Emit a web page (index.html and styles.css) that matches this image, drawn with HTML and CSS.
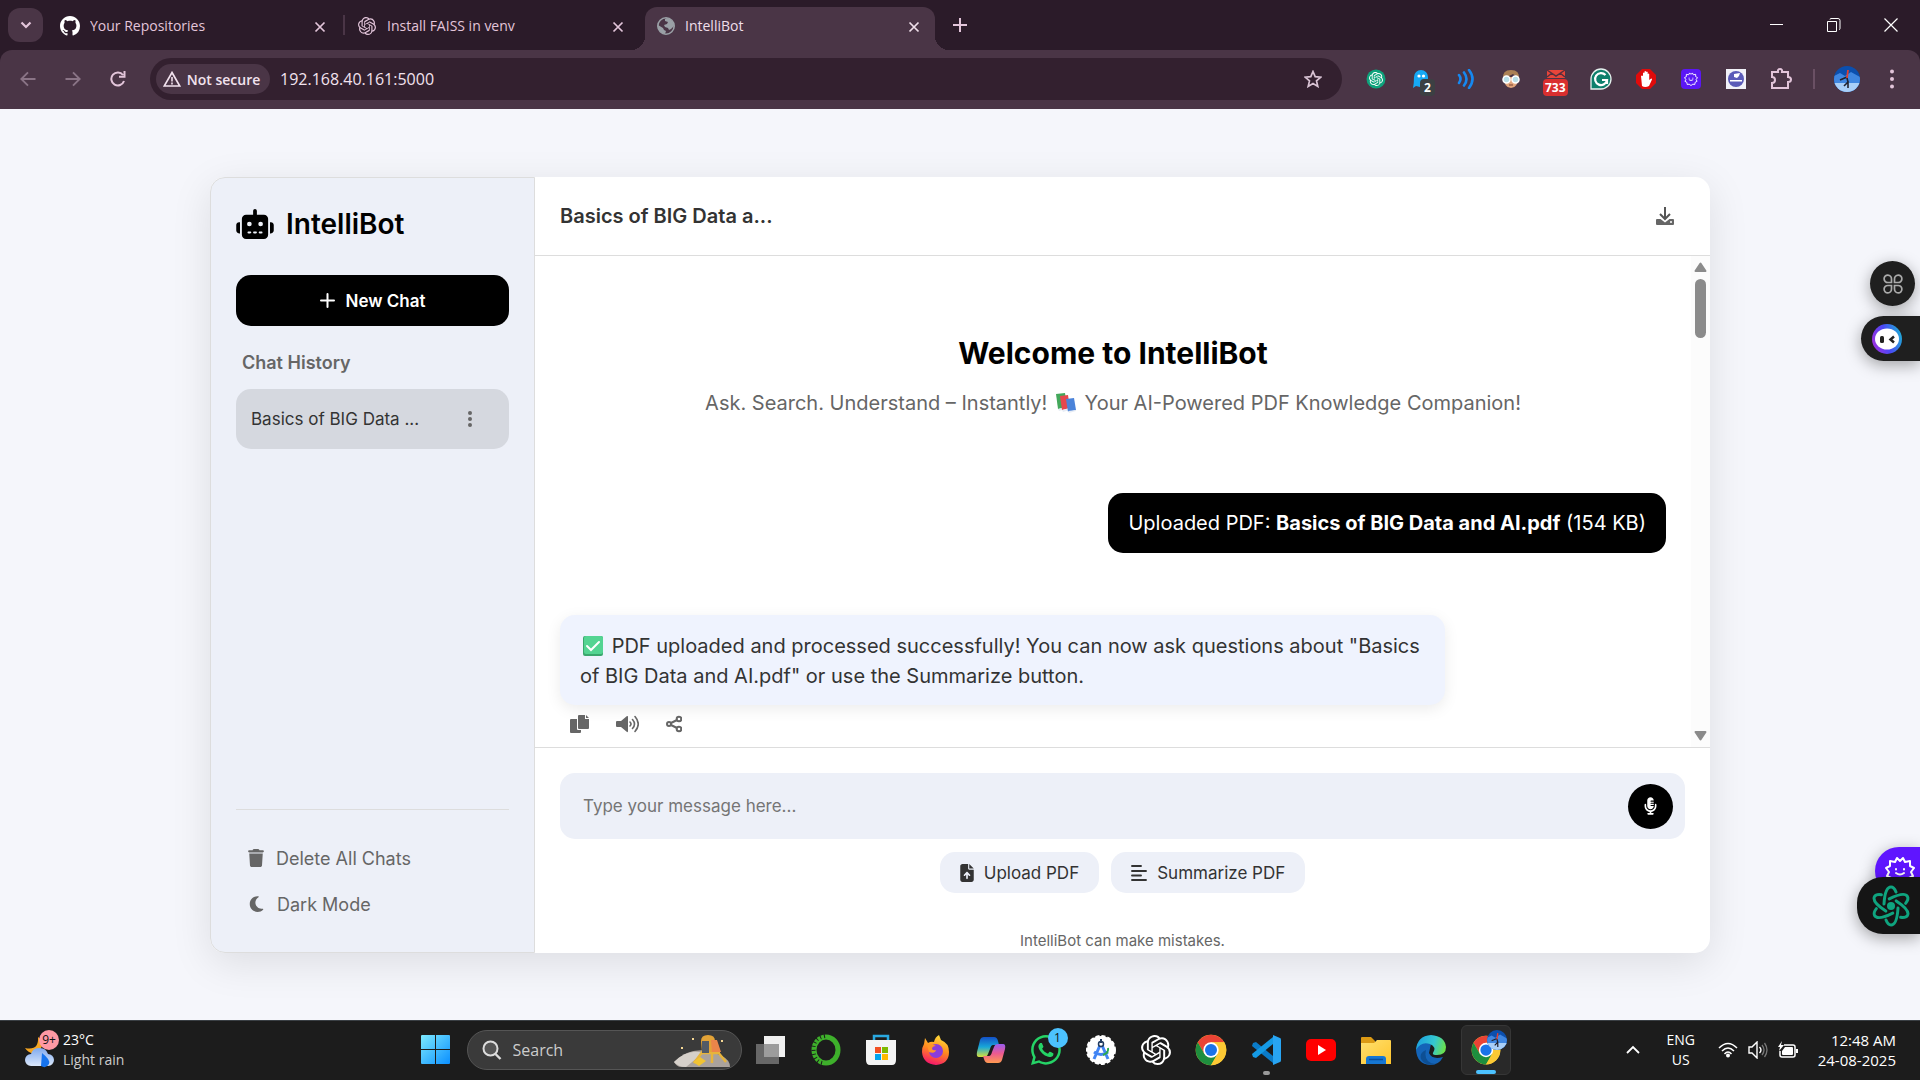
FILE: index.html
```html
<!DOCTYPE html>
<html lang="en">
<head>
<meta charset="utf-8">
<meta name="viewport" content="width=device-width, initial-scale=1">
<title>IntelliBot</title>
<link rel="stylesheet" href="styles.css">
</head>
<body>
<svg class="defs" width="0" height="0" aria-hidden="true">
  <defs>
    <symbol id="openai" viewBox="0 0 24 24"><path fill="currentColor" d="M22.2819 9.8211a5.9847 5.9847 0 0 0-.5157-4.9108 6.0462 6.0462 0 0 0-6.5098-2.9A6.0651 6.0651 0 0 0 4.9807 4.1818a5.9847 5.9847 0 0 0-3.9977 2.9 6.0462 6.0462 0 0 0 .7427 7.0966 5.98 5.98 0 0 0 .511 4.9107 6.051 6.051 0 0 0 6.5146 2.9001A5.9847 5.9847 0 0 0 13.2599 24a6.0557 6.0557 0 0 0 5.7718-4.2058 5.9894 5.9894 0 0 0 3.9977-2.9001 6.0557 6.0557 0 0 0-.7475-7.0729zm-9.022 12.6081a4.4755 4.4755 0 0 1-2.8764-1.0408l.1419-.0804 4.7783-2.7582a.7948.7948 0 0 0 .3927-.6813v-6.7369l2.02 1.1686a.071.071 0 0 1 .038.052v5.5826a4.504 4.504 0 0 1-4.4945 4.4944zm-9.6607-4.1254a4.4708 4.4708 0 0 1-.5346-3.0137l.142.0852 4.783 2.7582a.7712.7712 0 0 0 .7806 0l5.8428-3.3685v2.3324a.0804.0804 0 0 1-.0332.0615L9.74 19.9502a4.4992 4.4992 0 0 1-6.1408-1.6464zM2.3408 7.8956a4.485 4.485 0 0 1 2.3655-1.9728V11.6a.7664.7664 0 0 0 .3879.6765l5.8144 3.3543-2.0201 1.1685a.0757.0757 0 0 1-.071 0l-4.8303-2.7865A4.504 4.504 0 0 1 2.3408 7.872zm16.5963 3.8558L13.1038 8.364 15.1192 7.2a.0757.0757 0 0 1 .071 0l4.8303 2.7913a4.4944 4.4944 0 0 1-.6765 8.1042v-5.6772a.79.79 0 0 0-.407-.667zm2.0107-3.0231l-.142-.0852-4.7735-2.7818a.7759.7759 0 0 0-.7854 0L9.409 9.2297V6.8974a.0662.0662 0 0 1 .0284-.0615l4.8303-2.7866a4.4992 4.4992 0 0 1 6.6802 4.66zM8.3065 12.863l-2.02-1.1638a.0804.0804 0 0 1-.038-.0567V6.0742a4.4992 4.4992 0 0 1 7.3757-3.4537l-.142.0805L8.704 5.459a.7948.7948 0 0 0-.3927.6813zm1.0976-2.3654l2.602-1.4998 2.6069 1.4998v2.9994l-2.5974 1.4997-2.6067-1.4997Z"/></symbol>
    <symbol id="close" viewBox="0 0 12 12"><path d="M1.5 1.5l9 9M10.5 1.5l-9 9" fill="none" stroke="currentColor" stroke-width="1.7"/></symbol>
    <symbol id="chrome" viewBox="0 0 48 48">
      <circle cx="24" cy="24" r="23" fill="#fcc934"/>
      <path d="M4.1 12.5A23 23 0 0 1 43.9 12.5H24L14 29.8z" fill="#ea4335"/>
      <path d="M4.1 12.5A23 23 0 0 0 24 47L34 29.8 24 35 14 29.8z" fill="#1e8e3e"/>
      <path d="M24 47l10-17.2 1.2-13.8-11.2-3.5h19.9A23 23 0 0 1 24 47z" fill="#fcc934"/>
      <circle cx="24" cy="24" r="11.5" fill="#fff"/><circle cx="24" cy="24" r="9" fill="#1a73e8"/>
    </symbol>
    <symbol id="avatar" viewBox="0 0 26 26">
      <clipPath id="avatar-clip"><circle cx="13" cy="13" r="13"/></clipPath>
      <g clip-path="url(#avatar-clip)"><path fill="#0b4fae" d="M0 0h26v26H0z"/><path fill="#3f86e0" d="M0 10l6-3 5 3 6-4 9 5v15H0z"/><path fill="#a9cff8" d="M0 17h26v9H0z"/><path d="M6 14l7-3M13 12l1 4-4 4M14 15v7" fill="none" stroke="#22222e" stroke-width="1.600"/><path d="M14 4l-1 8" stroke="#e04030" stroke-width="1.800"/></g>
    </symbol>
    <symbol id="flower" viewBox="0 0 30 30"><path fill="none" stroke="currentColor" stroke-width="2" stroke-linejoin="round" d="M15 5l3-3 2 4 5-1v5l4 2-3 4 2 4-4 2-1 5-4-1-4 3-4-3-4 1-1-5-4-2 2-4-3-4 4-2V5l5 1 2-4z"/><path fill="none" stroke="currentColor" stroke-width="2" stroke-linecap="round" d="M11 13v.5M19 13v.5M11 17q4 3 8 0"/></symbol>
    <linearGradient id="win" x1="0" y1="0" x2="1" y2="1"><stop offset="0" stop-color="#7deaff"/><stop offset="1" stop-color="#0a8fff"/></linearGradient>
    <linearGradient id="cloud" x1="0" y1="0" x2="0" y2="1"><stop offset="0" stop-color="#7fa9ee"/><stop offset="1" stop-color="#dbe8fb"/></linearGradient>
    <linearGradient id="fox" x1=".7" y1="0" x2=".4" y2="1"><stop offset="0" stop-color="#ffe03a"/><stop offset=".5" stop-color="#ff8a1e"/><stop offset="1" stop-color="#f5156c"/></linearGradient>
    <linearGradient id="copa" x1="0" y1="0" x2="0" y2="1"><stop offset="0" stop-color="#1450c8"/><stop offset=".5" stop-color="#18a7d8"/><stop offset="1" stop-color="#d8e03a"/></linearGradient>
    <linearGradient id="copb" x1="0" y1="0" x2="0" y2="1"><stop offset="0" stop-color="#9a5cf0"/><stop offset=".5" stop-color="#ec5a90"/><stop offset="1" stop-color="#ff9a50"/></linearGradient>
    <linearGradient id="edge" x1="0" y1=".3" x2="1" y2=".5"><stop offset="0" stop-color="#1ba0e0"/><stop offset=".6" stop-color="#35c8d0"/><stop offset="1" stop-color="#6be04a"/></linearGradient>
    <linearGradient id="folder" x1="0" y1="0" x2="1" y2="1"><stop offset="0" stop-color="#ffe070"/><stop offset="1" stop-color="#ffc52c"/></linearGradient>
    <linearGradient id="ring" x1="0" y1=".7" x2="1" y2=".4"><stop offset="0" stop-color="#a030e0"/><stop offset=".5" stop-color="#4a48f5"/><stop offset="1" stop-color="#20a8d8"/></linearGradient>
  </defs>
</svg>

<header class="browser">
  <div class="tabs">
    <button class="tab-search" aria-label="Search tabs"><svg width="12" height="8" viewBox="0 0 12 8"><path d="M1.500 1.500L6 6l4.500-4.500" fill="none" stroke="currentColor" stroke-width="2.200"/></svg></button>
    <div class="tab tab-first">
      <svg width="20" height="20" viewBox="0 0 16 16"><path fill="#fff" d="M8 0C3.580 0 0 3.580 0 8c0 3.540 2.290 6.530 5.470 7.590.4.07.55-.17.55-.38 0-.19-.01-.82-.01-1.490-2.010.37-2.530-.49-2.690-.94-.09-.23-.48-.94-.82-1.130-.28-.15-.68-.52-.01-.53.63-.01 1.080.58 1.230.82.72 1.210 1.870.87 2.330.66.07-.52.28-.87.51-1.070-1.780-.2-3.640-.89-3.640-3.950 0-.87.31-1.590.82-2.150-.08-.2-.36-1.020.08-2.120 0 0 .67-.21 2.200.82.64-.18 1.320-.27 2-.27s1.360.09 2 .27c1.530-1.040 2.200-.82 2.200-.82.44 1.100.16 1.920.08 2.120.51.56.82 1.270.82 2.150 0 3.070-1.870 3.750-3.650 3.950.29.25.54.73.54 1.480 0 1.070-.01 1.930-.01 2.200 0 .21.15.46.55.38A8.010 8.010 0 0 0 16 8c0-4.420-3.580-8-8-8z"/></svg>
      <span>Your Repositories</span>
      <button class="tab-close" aria-label="Close tab"><svg width="12" height="12"><use href="#close"/></svg></button>
    </div>
    <div class="tab tab-second">
      <svg width="18" height="18"><use href="#openai"/></svg>
      <span>Install FAISS in venv</span>
      <button class="tab-close" aria-label="Close tab"><svg width="12" height="12"><use href="#close"/></svg></button>
    </div>
    <div class="tab tab-active">
      <svg width="18" height="18" viewBox="0 0 18 18"><circle cx="9" cy="9" r="8.200" fill="#4a3546" stroke="#9aa0a6" stroke-width="1.600"/><path fill="#9aa0a6" d="M1 8l5 3 1 2 2 1-1 3C3 16 1 13 1 8zM8 2l2-1c4 1 7 4 7 8l-3 3-2 1-1-2-3-1-1-2 3-1 1-2-3-1z"/></svg>
      <span>IntelliBot</span>
      <button class="tab-close" aria-label="Close tab"><svg width="12" height="12"><use href="#close"/></svg></button>
    </div>
    <button class="new-tab" aria-label="New tab"><svg width="14" height="14" viewBox="0 0 14 14"><path d="M7 0v14M0 7h14" stroke="currentColor" stroke-width="2"/></svg></button>
    <div class="window-controls">
      <button aria-label="Minimize"><svg width="14" height="14" viewBox="0 0 14 14"><path d="M0 6.500h13" stroke="#fff"/></svg></button>
      <button aria-label="Restore"><svg width="14" height="14" viewBox="0 0 14 14"><path d="M.5 3.500h9v10h-9zM3 1.500q0-1 1-1h7q2 0 2 2v8q0 1-1 1" fill="none" stroke="#fff"/></svg></button>
      <button aria-label="Close"><svg width="14" height="14" viewBox="0 0 14 14"><path d="M.5.5l13 13M13.500.5l-13 13" stroke="#fff" stroke-width="1.200"/></svg></button>
    </div>
  </div>
  <div class="toolbar">
    <nav class="nav-buttons">
      <button class="dim" aria-label="Back"><svg width="16" height="16" viewBox="0 0 16 16"><path d="M15.500 8H1.500M8 1.300L1.300 8 8 14.700" fill="none" stroke="currentColor" stroke-width="1.900"/></svg></button>
      <button class="dim" aria-label="Forward"><svg width="16" height="16" viewBox="0 0 16 16"><path d="M.5 8h14M8 1.300L14.700 8 8 14.700" fill="none" stroke="currentColor" stroke-width="1.900"/></svg></button>
      <button aria-label="Reload"><svg width="16" height="16" viewBox="0 0 16 16"><path d="M14 10A6.500 6.500 0 1 1 13 4M14.500 0v5.800H9" fill="none" stroke="currentColor" stroke-width="2"/></svg></button>
    </nav>
    <div class="omnibox">
      <button class="chip"><svg width="18" height="16" viewBox="0 0 18 16"><path d="M9 1.500L16.800 15H1.200z" fill="none" stroke="currentColor" stroke-width="1.700"/><path d="M9 6v4.500M9 11.500v2" stroke="currentColor" stroke-width="1.600"/></svg>Not secure</button>
      <input type="text" class="url" aria-label="Address" value="192.168.40.161:5000">
      <button class="star" aria-label="Bookmark"><svg width="18" height="18" viewBox="0 0 18 18"><path d="M9 1.500l2.200 5.200 5.600.5-4.300 3.700 1.300 5.500L9 13.500l-4.800 2.900 1.300-5.500L1.200 7.200l5.600-.5z" fill="none" stroke="currentColor" stroke-width="1.700"/></svg></button>
    </div>
    <div class="extensions">
      <button aria-label="ChatGPT extension"><svg width="20" height="20" viewBox="0 0 20 20"><circle cx="10" cy="10" r="9.500" fill="#0ea37c"/><svg class="on-colour" x="3" y="3" width="14" height="14"><use href="#openai"/></svg></svg></button>
      <button aria-label="Ghostery"><svg width="20" height="20" viewBox="0 0 20 20"><path fill="#16a8f5" d="M3 8a7 7 0 0 1 14 0v11l-4-3-4 2-4-1-3 2q1-5 1-11z"/><circle cx="8" cy="7" r="1.600" fill="#fff"/><circle cx="12.500" cy="7" r="1.600" fill="#fff"/></svg><span class="badge badge-dark">2</span></button>
      <button aria-label="Read aloud"><svg width="18" height="20" viewBox="0 0 18 20"><path d="M2 6q3 4 0 8M7 3.500q5 6.500 0 13M12 1q7 9 0 18" fill="none" stroke="#1688f0" stroke-width="2.600" stroke-linecap="round"/></svg></button>
      <button aria-label="Reader"><svg width="20" height="20" viewBox="0 0 20 20"><path fill="#e0a57c" d="M3 8h14q0 11-7 11T3 8z"/><path fill="#aa8055" d="M2 10Q1 1 10 1t8 9l-6-5z"/><g fill="#b8dfe8" stroke="#fff" stroke-width="1.500"><circle cx="5.500" cy="10.500" r="3.500"/><circle cx="14.500" cy="10.500" r="3.500"/></g><path d="M8 16h4" stroke="#774030"/></svg></button>
      <button aria-label="Mail checker"><svg width="20" height="20" viewBox="0 0 20 20"><path fill="#e8453a" d="M1 1h18v8H1z"/><path d="M1 1l9 6 9-6M1 8l5-4M19 8l-5-4" fill="none" stroke="#56303e" stroke-width="1.500"/></svg><span class="badge badge-red">733</span></button>
      <button aria-label="Grammarly"><svg width="22" height="22" viewBox="0 0 22 22"><path fill="#0d7f6c" stroke="#e6f2ef" stroke-width="1.300" d="M1 21V11A10 10 0 1 1 11 21z"/><path d="M15.500 7A6 6 0 1 0 17 12h-5M17 12v4" fill="none" stroke="#fff" stroke-width="2.200"/></svg></button>
      <button aria-label="Ad blocker"><svg width="22" height="22" viewBox="0 0 22 22"><path fill="#e00b0b" d="M7 1h8l6 6v8l-6 6H7l-6-6V7z"/><path fill="#fff" d="M6 8q1-1 2 0V5q1-1 1.500 0V3.500q1-1 1.500 0V4q1-1 1.700 0v2q1-1 1.500 0v6l2-1.500q1 0 .8 1L14 18q-4 2-7 0z"/></svg></button>
      <button aria-label="Assistant"><svg width="20" height="20" viewBox="0 0 20 20"><rect width="20" height="20" rx="4" fill="#5b17f5"/><svg class="on-colour" x="3" y="3" width="14" height="14"><use href="#flower"/></svg></svg></button>
      <button aria-label="TransCraft"><svg width="20" height="20" viewBox="0 0 20 20"><path fill="#f1f1f8" d="M0 0h20v20H0z"/><circle cx="10" cy="10" r="8" fill="#5a5ab8"/><path fill="#fff" d="M8 5l6-1-1 3-2 2-3-1zM4 11h12v1.500H4z"/></svg></button>
      <button aria-label="Extensions"><svg width="22" height="22" viewBox="0 0 22 22"><path d="M2 4h6q-.5-3 2-3t2 3h6v5q3 0 3 2.500T18 14v6H2v-5q3 0 3-3T2 9z" fill="none" stroke="currentColor" stroke-width="2"/></svg></button>
    </div>
    <span class="toolbar-rule"></span>
    <button class="profile" aria-label="Profile"><svg width="26" height="26"><use href="#avatar"/></svg></button>
    <button class="menu" aria-label="Menu"><svg width="4" height="20" viewBox="0 0 4 20"><g fill="currentColor"><circle cx="2" cy="2.500" r="2"/><circle cx="2" cy="10" r="2"/><circle cx="2" cy="17.500" r="2"/></g></svg></button>
  </div>
</header>

<main class="page">
  <div class="app">
    <aside class="sidebar">
      <h1 class="brand"><svg width="38" height="30" viewBox="0 0 640 512"><path d="M320 0c17.700 0 32 14.300 32 32V96H472c39.800 0 72 32.200 72 72V440c0 39.800-32.200 72-72 72H168c-39.800 0-72-32.200-72-72V168c0-39.800 32.200-72 72-72H288V32c0-17.700 14.300-32 32-32zM208 384c-8.800 0-16 7.200-16 16s7.200 16 16 16h32c8.800 0 16-7.200 16-16s-7.200-16-16-16H208zm96 0c-8.800 0-16 7.200-16 16s7.200 16 16 16h32c8.800 0 16-7.200 16-16s-7.200-16-16-16H304zm96 0c-8.800 0-16 7.200-16 16s7.200 16 16 16h32c8.800 0 16-7.200 16-16s-7.200-16-16-16H400zM264 256a40 40 0 1 0-80 0 40 40 0 1 0 80 0zm152 40a40 40 0 1 0 0-80 40 40 0 1 0 0 80zM48 224H64V416H48c-26.500 0-48-21.500-48-48V272c0-26.500 21.500-48 48-48zm544 0c26.500 0 48 21.500 48 48v96c0 26.500-21.500 48-48 48H576V224h16z"/></svg>IntelliBot</h1>
      <button class="new-chat"><svg width="15" height="15" viewBox="0 0 15 15"><path d="M7.500 1v13M1 7.500h13" stroke="#fff" stroke-width="2" stroke-linecap="round"/></svg>New Chat</button>
      <h2 class="history-title">Chat History</h2>
      <div class="history-item"><a href="#">Basics of BIG Data ...</a><button aria-label="Chat options"><svg width="4" height="16" viewBox="0 0 4 16"><g fill="#666"><circle cx="2" cy="2" r="2"/><circle cx="2" cy="8" r="2"/><circle cx="2" cy="14" r="2"/></g></svg></button></div>
      <div class="side-footer">
        <button><svg width="16" height="18" viewBox="0 0 448 512"><path fill="#666" d="M135.200 17.700C140.600 6.800 151.700 0 163.800 0H284.200c12.100 0 23.200 6.800 28.600 17.700L320 32h96c17.700 0 32 14.300 32 32s-14.300 32-32 32H32C14.300 96 0 81.700 0 64S14.300 32 32 32h96l7.200-14.300zM32 128H416L394.800 467c-1.600 25.300-22.600 45-47.900 45H101.100c-25.300 0-46.300-19.700-47.900-45L32 128z"/></svg>Delete All Chats</button>
        <button><svg width="17" height="18" viewBox="0 0 384 512"><path fill="#666" d="M223.500 32C100 32 0 132.300 0 256S100 480 223.500 480c60.600 0 115.500-24.200 155.800-63.400 5-4.900 6.300-12.500 3.100-18.700s-10.100-9.700-17-8.500c-9.800 1.700-19.800 2.600-30.100 2.600-96.900 0-175.500-78.800-175.500-176 0-65.800 36-123.100 89.300-153.300 6.100-3.500 9.200-10.500 7.700-17.300s-7.300-11.900-14.300-12.500c-6.300-.5-12.600-.8-19-.8z"/></svg>Dark Mode</button>
      </div>
    </aside>

    <section class="chat">
      <header class="chat-head">
        <h2>Basics of BIG Data a...</h2>
        <button aria-label="Download chat"><svg width="18" height="18" viewBox="0 0 18 18"><path d="M9 0v11M4 7l5 5 5-5" fill="none" stroke="#555" stroke-width="2"/><path fill="#666" d="M1 12h3.500L9 15.500 13.500 12H17q1 0 1 1v4q0 1-1 1H1q-1 0-1-1v-4q0-1 1-1z"/><circle cx="15" cy="15" r="1" fill="#fff"/></svg></button>
      </header>
      <div class="scroll">
        <div class="messages">
          <div class="welcome">
            <h2>Welcome to IntelliBot</h2>
            <p>Ask. Search. Understand – Instantly! <svg class="emoji" role="img" aria-label="books" width="22" height="20" viewBox="0 0 22 20"><path fill="#43a85b" d="M1 1l9-1 2 14-9 2z"/><path fill="#e8edf5" d="M3 16l9-2v2l-8 2z"/><path fill="#e5484d" d="M5 3l8-1 2 13-8 2z"/><path fill="#e8edf5" d="M7 17l8-2v2l-7 2z"/><path fill="#4b83d9" d="M11 6l8-1 2 12-8 2z"/><path fill="#e8edf5" d="M13 18l8-1v1l-7 2z"/></svg> Your AI-Powered PDF Knowledge Companion!</p>
          </div>
          <p class="bubble user">Uploaded PDF: <strong>Basics of BIG Data and AI.pdf</strong> (154 KB)</p>
          <div class="reply">
            <p class="bubble bot"><svg class="emoji check" role="img" aria-label="done" width="20" height="20" viewBox="0 0 20 20"><rect width="20" height="20" rx="2" fill="#3aa76d"/><rect x="1" width="19" height="18" rx="2" fill="#54d492"/><path d="M4 10l4 4 8-8" fill="none" stroke="#fff" stroke-width="2" stroke-linecap="round"/></svg> PDF uploaded and processed successfully! You can now ask questions about "Basics of BIG Data and AI.pdf" or use the Summarize button.</p>
            <div class="reply-actions">
              <button aria-label="Copy"><svg width="19" height="18" viewBox="0 0 19 18"><path fill="#666" d="M9 0h6v4h4v9q0 1-1 1H9q-1 0-1-1V1q0-1 1-1zM16 0l3 3h-3zM1 4h6v10q0 1 1 1h3v2q0 1-1 1H1q-1 0-1-1V5q0-1 1-1z"/></svg></button>
              <button aria-label="Read aloud"><svg width="23" height="18" viewBox="0 0 23 18"><path fill="#666" d="M1 6h4l6-5q1-.5 1 1v14q0 1.500-1 1l-6-5H1q-1 0-1-1V7q0-1 1-1z"/><path d="M14 7q2 2 0 4M16.500 4.500q4 4.500 0 9M19 1.500q6.500 7.500 0 15" fill="none" stroke="#666" stroke-width="1.600" stroke-linecap="round"/></svg></button>
              <button aria-label="Share"><svg width="16" height="18" viewBox="0 0 16 18"><g fill="none" stroke="#666" stroke-width="2"><circle cx="3" cy="9" r="2"/><circle cx="13" cy="4" r="2.300"/><circle cx="13" cy="14" r="2.300"/><path d="M5 8l6-3M5 10l6 3"/></g></svg></button>
            </div>
          </div>
        </div>
        <div class="scrollbar" aria-hidden="true">
          <svg width="13" height="10" viewBox="0 0 13 10"><path fill="#8b8b8b" stroke="#8b8b8b" stroke-width="2" stroke-linejoin="round" d="M6.500 1.500L11.500 9h-10z"/></svg>
          <span class="thumb"></span>
          <svg class="down" width="13" height="10" viewBox="0 0 13 10"><path fill="#8b8b8b" stroke="#8b8b8b" stroke-width="2" stroke-linejoin="round" d="M6.500 8.500L11.500 1h-10z"/></svg>
        </div>
      </div>
      <footer class="composer">
        <div class="entry">
          <input type="text" aria-label="Message" placeholder="Type your message here...">
          <button aria-label="Voice input"><svg width="13" height="18" viewBox="0 0 384 512"><path fill="#fff" d="M192 0C139 0 96 43 96 96V256c0 53 43 96 96 96s96-43 96-96H208c-8.800 0-16-7.200-16-16s7.200-16 16-16h80V192H208c-8.800 0-16-7.200-16-16s7.200-16 16-16h80V128H208c-8.800 0-16-7.200-16-16s7.200-16 16-16h80c0-53-43-96-96-96zM320 240v16c0 70.700-57.300 128-128 128s-128-57.300-128-128V216c0-13.300-10.700-24-24-24s-24 10.700-24 24v40c0 89.100 66.200 162.700 152 174.400V464H120c-13.300 0-24 10.700-24 24s10.700 24 24 24H264c13.300 0 24-10.700 24-24s-10.700-24-24-24H216V430.400c85.800-11.700 152-85.300 152-174.400V216c0-13.300-10.700-24-24-24s-24 10.700-24 24v24z"/></svg></button>
        </div>
        <div class="actions">
          <button><svg width="14" height="18" viewBox="0 0 384 512"><path fill="#333" d="M64 0C28.700 0 0 28.700 0 64V448c0 35.300 28.700 64 64 64H320c35.300 0 64-28.700 64-64V160H256c-17.700 0-32-14.300-32-32V0H64zM256 0V128H384L256 0zM216 408c0 13.300-10.700 24-24 24s-24-10.700-24-24V305.900l-31 31c-9.400 9.400-24.600 9.400-33.900 0s-9.400-24.600 0-33.900l72-72c9.400-9.400 24.600-9.400 33.900 0l72 72c9.400 9.400 9.400 24.600 0 33.900s-24.600 9.400-33.900 0l-31-31V408z"/></svg>Upload PDF</button>
          <button><svg width="16" height="16" viewBox="0 0 16 16"><path d="M1 1h9M1 6h14M1 10.500h9M1 15h14" stroke="#333" stroke-width="1.900" stroke-linecap="round"/></svg>Summarize PDF</button>
        </div>
        <p class="disclaimer">IntelliBot can make mistakes.</p>
      </footer>
    </section>
  </div>

  <button class="float float-grid" aria-label="Apps"><svg width="20" height="20" viewBox="0 0 20 20"><path d="M8.500 8.500H5A3.700 3.700 0 1 1 8.500 5zM11.500 8.500H15A3.700 3.700 0 1 0 11.500 5zM8.500 11.500H5A3.700 3.700 0 1 0 8.500 15zM11.500 11.500H15A3.700 3.700 0 1 1 11.500 15z" fill="none" stroke="#aaa" stroke-width="1.700"/></svg></button>
  <button class="float float-face" aria-label="Assistant"><svg width="30" height="30" viewBox="0 0 30 30"><circle cx="15" cy="15" r="15" fill="url(#ring)"/><ellipse cx="15" cy="15" rx="12" ry="10.500" fill="#fff"/><rect x="8" y="12" width="4" height="7" rx="1.500" fill="#222"/><path d="M22 12.500l-3.500 3 3.500 3" fill="none" stroke="#222" stroke-width="2.500"/></svg></button>
  <button class="float float-purple" aria-label="Helper"><svg width="30" height="30"><use href="#flower"/></svg></button>
  <button class="float float-atom" aria-label="ChatGPT"><svg width="40" height="42" viewBox="-20 -21 40 42"><g fill="none" stroke="#0fa47f" stroke-width="3" stroke-linecap="round"><path id="arm" d="M-7-2Q-6-19 0-19Q3-19 5-14"/><use href="#arm" transform="rotate(60)"/><use href="#arm" transform="rotate(120)"/><use href="#arm" transform="rotate(180)"/><use href="#arm" transform="rotate(240)"/><use href="#arm" transform="rotate(300)"/></g><circle r="4" fill="#0fa47f"/></svg></button>
</main>

<footer class="taskbar">
  <button class="weather">
    <span class="weather-icon"><svg width="30" height="38" viewBox="0 0 30 38"><path fill="#f5a623" d="M13 6q1 14-13 11 4 6 9 5 9-3 9-12z"/><path fill="url(#cloud)" d="M6 35a6 6 0 0 1 0-12q2-7 9-6 6 0 8 6a6 6 0 0 1 0 12z"/><path fill="#1674ef" d="M17 22q9 7 7 11-3 5-8 2z"/></svg><span class="count">9+</span></span>
    <span class="weather-text"><span>23°C</span><span class="soft">Light rain</span></span>
  </button>
  <div class="center">
    <button class="start" aria-label="Start"><svg width="29" height="30" viewBox="0 0 29 30"><path fill="url(#win)" d="M1 0h13v14H0V1q0-1 1-1zM15 0h13q1 0 1 1v13H15zM0 15h14v14H1q-1 0-1-1zM15 15h14v13q0 1-1 1H15z"/></svg></button>
    <label class="search"><svg width="20" height="20" viewBox="0 0 20 20"><circle cx="8.500" cy="8.500" r="7" fill="#555" stroke="#ddd" stroke-width="2"/><path d="M13.500 14l5 5" stroke="#ddd" stroke-width="2.400"/></svg><input type="text" placeholder="Search" aria-label="Search"><svg class="lander" width="58" height="34" viewBox="0 0 58 34"><path fill="#aaa29c" d="M0 28Q20 8 48 22q8 4 8 11H7q-4 0-7-5z"/><path fill="#d6d0ca" d="M0 28Q14 14 29 19L12 33q-8 0-12-5z"/><path d="M29 17L20 29M43 17l9 11M38 17v12M28 19h18" stroke="#e7b43b" stroke-width="2.500"/><path fill="#e3a337" d="M27 7q0-6 7-6t7 6l4 11H28z"/><path fill="#525a66" d="M28 7h7v12h-7z"/><path fill="#eb854a" d="M37 6h6l4 12h-9z"/><path fill="#f1c333" d="M19 28l7-5 6 4-7 5z"/><path fill="#f6d894" d="M7 13h2v2H7zM18 4h2v2h-2zM47 6h2v2h-2z"/></svg></label>
    <div class="apps">
      <button aria-label="Task view"><svg width="30" height="30" viewBox="0 0 30 30"><path fill="#f0f0f0" d="M8 1h21v21H8z"/><path fill="#808080" opacity=".75" d="M0 9h23v20H0z"/></svg></button>
      <button aria-label="Anaconda"><svg width="30" height="32" viewBox="0 0 30 32"><ellipse cx="15" cy="16" rx="12" ry="13" fill="none" stroke="#3eb02b" stroke-width="5"/><path d="M14 2Q2 4 2.500 16T12 29" fill="none" stroke="#1c1c1c" stroke-width="4" stroke-dasharray="1 3"/></svg></button>
      <button aria-label="Store"><svg width="30" height="32" viewBox="0 0 30 32"><path d="M8 8V2h14v6" fill="none" stroke="#29a8e0" stroke-width="2.500"/><path fill="#f4f4f4" d="M0 6h30v20q0 5-4 5H4q-4 0-4-5z"/><path fill="#f25022" d="M9 13h6v6H9z"/><path fill="#7fba00" d="M16 13h6v6h-6z"/><path fill="#00a4ef" d="M9 20h6v6H9z"/><path fill="#ffb900" d="M16 20h6v6h-6z"/></svg></button>
      <button aria-label="Firefox"><svg width="30" height="30" viewBox="0 0 30 30"><path fill="url(#fox)" d="M4 3l3 5q3-2 6-1 1-5 5-7l2 5q8 3 8 12 0 12-13 13Q2 29 1 17q0-5 2-8z"/><circle cx="15" cy="16" r="7" fill="#8a3ddb"/><path fill="#ff9528" d="M6 10q5-2 9 1-4 0-4 3 1 2 4 1-1 4-7 2z"/></svg></button>
      <button aria-label="Copilot"><svg width="30" height="28" viewBox="0 0 30 28"><path fill="url(#copa)" d="M8 1h10q3 0 4 4l1 4h-6q-2 0-3 4l-2 5q-1 3-4 3H3q-3 0-2-5L4 4q1-3 4-3z"/><path fill="url(#copb)" d="M22 27H12q-3 0-4-4l-1-3h6q2 0 3-4l2-5q1-3 4-3h5q3 0 2 5l-3 11q-1 3-4 3z"/></svg></button>
      <button aria-label="WhatsApp"><svg width="30" height="32" viewBox="0 30 450 452"><path fill="#25d366" d="M380.900 97.100C339 55.100 283.200 32 223.900 32c-122.400 0-222 99.600-222 222 0 39.100 10.200 77.300 29.600 111L0 480l117.700-30.900c32.400 17.700 68.900 27 106.100 27h.1c122.300 0 224.100-99.600 224.100-222 0-59.300-25.200-115-67.100-157zm-157 341.600c-33.200 0-65.700-8.900-94-25.700l-6.700-4-69.800 18.300L72 359.200l-4.400-7c-18.500-29.400-28.200-63.300-28.200-98.200 0-101.700 82.800-184.500 184.600-184.500 49.300 0 95.600 19.200 130.400 54.100 34.800 34.900 56.200 81.200 56.100 130.500 0 101.800-84.900 184.600-186.600 184.600zm101.200-138.200c-5.500-2.800-32.800-16.200-37.900-18-5.100-1.900-8.800-2.800-12.500 2.800-3.700 5.600-14.300 18-17.600 21.800-3.200 3.700-6.500 4.200-12 1.400-32.600-16.300-54-29.100-75.500-66-5.700-9.800 5.700-9.100 16.300-30.300 1.800-3.700.9-6.900-.5-9.700-1.400-2.800-12.500-30.100-17.100-41.200-4.500-10.800-9.100-9.300-12.500-9.500-3.200-.2-6.900-.2-10.600-.2-3.700 0-9.700 1.400-14.800 6.900-5.100 5.600-19.400 19-19.400 46.300 0 27.300 19.900 53.700 22.600 57.400 2.800 3.700 39.100 59.700 94.800 83.800 35.200 15.200 49 16.500 66.600 13.900 10.700-1.600 32.800-13.400 37.400-26.400 4.600-13 4.600-24.100 3.200-26.400-1.300-2.500-5-3.900-10.500-6.600z"/></svg><span class="dot-badge">1</span></button>
      <button aria-label="Android Studio"><svg width="30" height="30" viewBox="0 0 30 30"><circle cx="15" cy="15" r="14" fill="#fff" stroke="#fff" stroke-width="2" stroke-dasharray="4 2"/><path d="M15 8L8 24M15 8l7 16M8 17q7 5 14 0" fill="none" stroke="#4285f4" stroke-width="3"/><path d="M22 13q1 5-5 7" fill="none" stroke="#2da94f" stroke-width="2"/><circle cx="15" cy="9" r="2.500" fill="#fff" stroke="#203a60" stroke-width="1.500"/><path d="M15 4v4" stroke="#203a60" stroke-width="2"/></svg></button>
      <button aria-label="ChatGPT"><svg class="on-colour" width="30" height="30"><use href="#openai"/></svg></button>
      <button aria-label="Chrome"><svg width="32" height="32"><use href="#chrome"/></svg></button>
      <button class="running" aria-label="VS Code"><svg width="30" height="30" viewBox="0 0 30 30"><path fill="#0a7bc8" d="M2 8l3-1 17 14v7L1 11z"/><path fill="#159ae5" d="M2 22l3 1L22 9V2L1 19z"/><path fill="#28a5f3" d="M22 0l7 3q1 0 1 2v20q0 2-1 2l-7 3z"/></svg></button>
      <button aria-label="YouTube"><svg width="30" height="22" viewBox="0 0 30 22"><rect width="30" height="22" rx="5" fill="#f00"/><path fill="#fff" d="M12 6l8 5-8 5z"/></svg></button>
      <button aria-label="File Explorer"><svg width="30" height="28" viewBox="0 0 30 28"><path fill="#dc9a14" d="M0 2q0-1 1-1h9l4 4v4H0z"/><path fill="url(#folder)" d="M0 7h13l3-3h13q1 0 1 1v23H0z"/><path fill="#1677d3" d="M5 28v-5q0-3 3-3h14q3 0 3 3v5z"/><path d="M8 23.500h14" stroke="#0b4f9c" stroke-width="1.500"/></svg></button>
      <button aria-label="Edge"><svg width="30" height="30" viewBox="0 0 30 30"><path fill="#1464b8" d="M0 15C2 6 10 5 15 9l-2 9q3 7 14 4-4 8-13 8Q1 29 0 15z"/><path fill="url(#edge)" d="M0 15Q1 1 15 0q14 1 15 12 0 8-9 8-5 0-4-2 4-6-3-9Q5 6 0 15z"/><path fill="#0d4f94" d="M10 15q-3 13 10 14-10 3-15-5-2-6 5-9z"/></svg></button>
      <button class="current" aria-label="Chrome, profile window"><svg width="30" height="32" viewBox="0 0 30 32"><use href="#chrome" width="30" height="32"/></svg><svg class="app-profile" width="20" height="20"><use href="#avatar"/></svg></button>
    </div>
  </div>
  <div class="tray">
    <button aria-label="Hidden icons"><svg width="14" height="9" viewBox="0 0 14 9"><path d="M1 8l6-6 6 6" fill="none" stroke="#fff" stroke-width="1.800"/></svg></button>
    <button class="stack language"><span>ENG</span><span>US</span></button>
    <button class="status" aria-label="Network, sound and battery">
      <svg width="20" height="16" viewBox="0 0 20 16"><path d="M1 6q9-9 18 0M4 9q6-6 12 0M6.500 12q3.500-4 7 0" fill="none" stroke="#fff" stroke-width="1.500"/><circle cx="10" cy="13.500" r="2" fill="#fff"/></svg>
      <svg width="20" height="18" viewBox="0 0 20 18"><path d="M1 6h3l5-5v16l-5-5H1z" fill="none" stroke="#fff" stroke-width="1.400"/><path d="M11.500 6q3 3 0 6" fill="none" stroke="#fff" stroke-width="1.400"/><path d="M14 4q4 5 0 10M16.500 2q5 7 0 14" fill="none" stroke="#777" stroke-width="1.300"/></svg>
      <svg width="20" height="17" viewBox="0 0 20 17"><path d="M6 4h9q2 0 2 2v8q0 2-2 2H4q-2 0-2-2v-4" fill="none" stroke="#fff" stroke-width="1.500"/><path fill="#fff" d="M7 6h7q1 0 1 1v6q0 1-1 1H5q-1 0-1-1v-3zM18 8h2v4h-2zM4 0L0 6h2L1 10l5-6H3z"/></svg>
    </button>
    <button class="stack clock"><span>12:48 AM</span><span>24-08-2025</span></button>
  </div>
</footer>
</body>
</html>
```
FILE: styles.css
```css
* { box-sizing: border-box; }
body {
  margin: 0;
  min-height: 100vh;
  display: flex;
  flex-direction: column;
  font-family: Inter, "Liberation Sans", sans-serif;
  color: #333;
  background: #f5f6fb;
}
button, input { font: inherit; color: inherit; border: 0; background: none; padding: 0; margin: 0; }
button { display: flex; align-items: center; justify-content: center; white-space: nowrap; flex-shrink: 0; }
input { min-width: 0; outline: 0; }
h1, h2, p { margin: 0; }
svg { display: block; flex-shrink: 0; }
.defs { position: absolute; }
.on-colour { color: #fff; }

/* Browser window */
.browser { font-family: "Open Sans", sans-serif; background: #2b1b29; color: #e3c5da; }
.tabs { display: flex; height: 50px; padding-left: 8px; font-size: 14px; }
.tab-search { width: 35px; height: 34px; margin: 8px 8px 0 0; border-radius: 12px; background: #4a3546; }
.tab { display: flex; align-items: center; height: 43px; margin-top: 7px; padding: 0 15px 6px 12px; gap: 10px; min-width: 0; }
.tab span { flex: 1; padding-bottom: 1px; white-space: nowrap; overflow: hidden; }
.tab-close { padding-top: 2px; }
.tab-first { width: 290px; padding-left: 9px; }
.tab-second { width: 304px; padding: 0 21px 6px 17px; gap: 11px; position: relative; }
.tab-second::before { content: ""; position: absolute; left: 2px; top: 8px; width: 2px; height: 20px; background: #4a3546; }
.tab-active { width: 290px; position: relative; border-radius: 12px 12px 0 0; background: #4a3546; color: #efdfea; }
.tab-active::before, .tab-active::after { content: ""; position: absolute; bottom: 0; width: 14px; height: 14px; }
.tab-active::before { right: 100%; background: radial-gradient(circle at 0 0, transparent 14px, #4a3546 14px); }
.tab-active::after { left: 100%; background: radial-gradient(circle at 100% 0, transparent 14px, #4a3546 14px); }
.new-tab { width: 50px; }
.window-controls { display: flex; margin-left: auto; padding-right: 1px; }
.window-controls button { width: 57px; }
.toolbar { display: flex; align-items: center; height: 59px; padding: 0 26px 1px 5px; background: #4a3546; border-radius: 12px 12px 0 0; }
.nav-buttons { display: flex; }
.nav-buttons button { width: 45px; height: 40px; }
.dim { color: #8a7486; }
.omnibox { display: flex; align-items: center; flex: 1; height: 42px; margin-left: 10px; padding: 0 20px 0 6px; border-radius: 21px; background: #33202f; }
.chip { width: 114px; height: 30px; padding-right: 3px; gap: 6px; border-radius: 15px; background: #4a3546; color: #f2e2ee; font-size: 14px; font-weight: 600; }
.url { flex: 1; margin-left: 10px; color: #f2e2ee; font-size: 16px; }
.star { color: #d9c3d4; }
.extensions { display: flex; margin-left: 11px; }
.extensions button { position: relative; width: 45px; height: 34px; }
.badge { position: absolute; left: 22px; top: 17px; padding: 0 4px; border-radius: 4px; font-size: 12px; line-height: 17px; font-weight: 700; color: #fff; }
.badge-dark { background: #3c4043; }
.badge-red { left: 10px; background: #d92f2f; padding: 0 2px; }
.toolbar-rule { width: 2px; height: 20px; margin: 0 19px 0 10px; background: #6a5064; }
.menu { margin-left: 30px; }

/* Chat application */
.page { flex: 1; display: flex; justify-content: center; padding: 68px 24px 67px; position: relative; overflow: hidden; }
.app { display: grid; grid-template-columns: 325px 1fr; width: 100%; max-width: 1500px; border-radius: 15px; background: #fff; box-shadow: 0 10px 40px rgba(0, 0, 0, .1); }
.sidebar { display: flex; flex-direction: column; padding: 23px 25px 25px; background: #edf0f8; border: 1px solid #ddd; border-radius: 15px 0 0 15px; }
.brand { display: flex; align-items: center; gap: 12px; height: 45px; font-size: 28px; font-weight: 600; color: #000; }
.new-chat { height: 51px; margin-top: 29px; gap: 11px; border-radius: 15px; background: #000; color: #fff; font-size: 17px; font-weight: 600; }
.history-title { margin: 26px 0 15px 6px; font-size: 18px; line-height: 22px; font-weight: 600; color: #666; }
.history-item { display: flex; align-items: center; justify-content: space-between; height: 60px; padding: 0 32px 0 15px; border-radius: 15px; background: #d5d8df; font-size: 17px; }
.history-item a { color: inherit; text-decoration: none; }
.history-item button { width: 14px; height: 24px; }
.side-footer { display: flex; flex-direction: column; margin-top: auto; padding: 25px 12px 0; border-top: 1px solid #ddd; font-size: 18px; color: #666; }
.side-footer button { justify-content: flex-start; height: 46px; gap: 12px; }
.chat { display: flex; flex-direction: column; min-width: 0; }
.chat-head { display: flex; align-items: center; justify-content: space-between; height: 79px; padding: 0 36px 0 25px; border-bottom: 1px solid #ddd; }
.chat-head h2 { font-size: 20px; font-weight: 600; }
.scroll { display: flex; flex: 1; }
.messages { flex: 1; display: flex; flex-direction: column; padding: 0 25px; font-size: 20px; line-height: 30px; }
.welcome { padding: 76px 0 0; text-align: center; }
.welcome h2 { font-size: 30px; line-height: 42px; font-weight: 700; color: #000; }
.welcome p { margin-top: 14px; color: #666; }
.emoji { display: inline-block; margin: 0 2px; vertical-align: -3px; }
.check { margin: 0 3px; }
.bubble { padding: 15px 20px; border-radius: 15px; }
.user { align-self: flex-end; margin-top: 75px; background: #000; color: #fff; }
.reply { margin-top: 62px; max-width: 80%; }
.bot { padding: 16px 20px 14px; background: #eff3fe; box-shadow: 0 4px 15px rgba(0, 0, 0, .08); }
.reply-actions { display: flex; gap: 27px; padding: 10px 10px; }
.scrollbar { display: flex; flex-direction: column; align-items: center; width: 19px; padding: 6px 0; background: #fcfcfc; }
.thumb { width: 11px; height: 59px; margin-top: 7px; border-radius: 6px; background: #8b8b8b; }
.down { margin-top: auto; }
.composer { padding: 25px 25px 2px; border-top: 1px solid #ddd; }
.entry { display: flex; align-items: center; height: 66px; padding: 0 12px 0 23px; border-radius: 15px; background: #edf0f8; }
.entry input { flex: 1; font-size: 17px; }
.entry input::placeholder { color: #757575; opacity: 1; }
.entry button { width: 45px; height: 45px; border-radius: 50%; background: #000; }
.actions { display: flex; justify-content: center; gap: 12px; margin-top: 13px; }
.actions button { height: 41px; padding: 0 20px; gap: 10px; border-radius: 15px; background: #edf0f8; font-size: 17px; }
.disclaimer { margin-top: 38px; text-align: center; font-size: 15px; line-height: 20px; color: #666; }

/* Extension widgets pinned over the page edge */
.float { position: absolute; right: 0; background: #1f1f1f; box-shadow: 0 4px 16px rgba(0, 0, 0, .35); }
.float-grid { right: 5px; top: 152px; width: 45px; height: 45px; border-radius: 50%; }
.float-face { top: 207px; width: 59px; height: 45px; padding-right: 7px; border-radius: 23px 0 0 23px; }
.float-purple { bottom: 125px; width: 45px; height: 48px; padding-left: 4px; border-radius: 24px 0 0 24px; background: #5f15ff; color: #fff; }
.float-atom { bottom: 86px; width: 63px; height: 57px; padding-left: 5px; border-radius: 26px 0 0 26px; background: #151515; }

/* Desktop taskbar */
.taskbar { display: grid; grid-template-columns: 1fr auto 1fr; height: 60px; padding-bottom: 2px; background: #1c1c1c; border-top: 1px solid #3a3f44; color: #fff; font-family: "Open Sans", sans-serif; font-size: 15px; line-height: 20px; }
.weather { justify-self: start; padding-left: 25px; gap: 8px; font-size: 14px; }
.weather-icon { position: relative; }
.count { position: absolute; left: 14px; top: -1px; width: 20px; border-radius: 10px; background: #ff99a4; color: #111; font-size: 12px; text-align: center; }
.weather-text { display: flex; flex-direction: column; text-align: left; }
.soft { color: #ccc; }
.center { display: flex; align-items: center; }
.start { width: 55px; }
.search { display: flex; align-items: center; width: 275px; height: 40px; margin-left: 4px; padding: 0 9px 0 14px; gap: 11px; border: 1px solid #555; border-radius: 20px; background: #3a3a3a; font-size: 16px; }
.search input { flex: 1; }
.search input::placeholder { color: #ccc; opacity: 1; }
.lander { margin-top: 3px; }
.apps { display: flex; margin-left: 2px; }
.apps button { position: relative; width: 55px; height: 50px; }
.dot-badge { position: absolute; left: 29px; top: 3px; width: 20px; border-radius: 10px; background: #4cc2ff; color: #111; font-size: 12px; }
.running::after, .current::after { content: ""; position: absolute; bottom: 0; left: 24px; width: 7px; height: 4px; border-radius: 2px; background: #999; }
.apps .current { width: 50px; margin: 0 2px; border: 1px solid #363636; border-radius: 6px; background: #292929; }
.current::after { left: 14px; width: 20px; background: #4cc2ff; }
.app-profile { position: absolute; right: 3px; top: 4px; }
.tray { display: flex; align-items: center; justify-content: flex-end; padding-right: 24px; }
.stack { flex-direction: column; }
.language { width: 34px; margin: 0 20px 0 24px; font-size: 14px; }
.status { gap: 10px; }
.clock { align-items: flex-end; margin-left: 20px; }
```
